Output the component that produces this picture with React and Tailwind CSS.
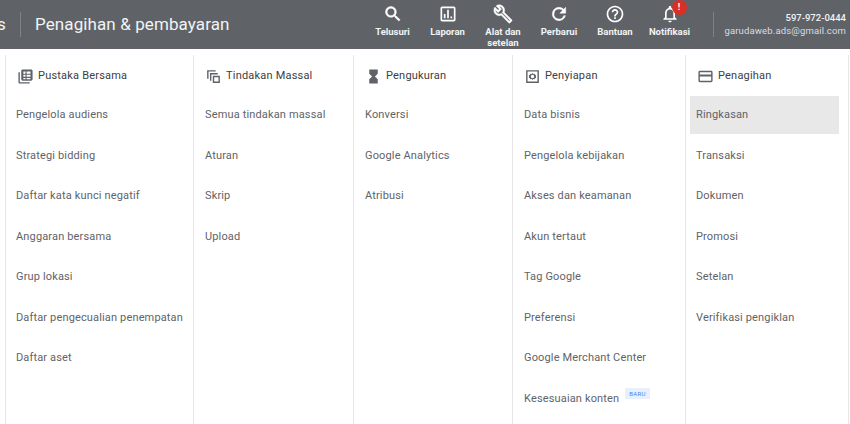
const Search = () => (
  <svg width="20" height="20" viewBox="0 0 24 24" fill="#fff" stroke="#fff" strokeWidth="0.6"><path d="M15.5 14h-.79l-.28-.27A6.47 6.47 0 0 0 16 9.5 6.5 6.5 0 1 0 9.5 16c1.61 0 3.09-.59 4.23-1.57l.27.28v.79l5 4.99L20.49 19l-4.99-5zm-6 0C7.01 14 5 11.99 5 9.5S7.01 5 9.5 5 14 7.01 14 9.5 11.99 14 9.5 14z" /></svg>
);
const Report = () => (
  <svg width="20" height="20" viewBox="0 0 24 24" fill="#fff"><path d="M19 3H5c-1.1 0-2 .9-2 2v14c0 1.1.9 2 2 2h14c1.1 0 2-.9 2-2V5c0-1.1-.9-2-2-2zm0 16H5V5h14v14zM7 12h2v5H7zm4-5h2v10h-2zm4 8h2v2h-2z" /></svg>
);
const Wrench = () => (
  <svg width="20" height="20" viewBox="0 0 24 24" fill="#fff" stroke="#fff" strokeWidth="0.5"><path d="M22.61 18.99l-9.08-9.08c.93-2.34.45-5.1-1.44-7C9.79.61 6.21.4 3.66 2.26L7.5 6.11 6.08 7.52 2.25 3.69C.39 6.23.6 9.82 2.9 12.11c1.86 1.86 4.57 2.35 6.89 1.48l9.11 9.11c.39.39 1.02.39 1.41 0l2.3-2.3c.4-.38.4-1.01 0-1.41zm-3 1.6l-9.46-9.46c-.61.45-1.29.72-2 .82-1.36.2-2.79-.21-3.83-1.25C3.37 9.76 2.93 8.5 3 7.26l3.09 3.09 4.24-4.24-3.09-3.09c1.24-.07 2.49.37 3.44 1.31 1.08 1.08 1.49 2.57 1.24 3.96-.12.71-.42 1.37-.88 1.96l9.45 9.45-.88.89z" /></svg>
);
const Refresh = () => (
  <svg width="20" height="20" viewBox="0 0 24 24" fill="#fff" stroke="#fff" strokeWidth="0.6"><path d="M17.65 6.35A7.95 7.95 0 0 0 12 4a8 8 0 1 0 7.73 10h-2.08A6 6 0 1 1 12 6c1.66 0 3.14.69 4.22 1.78L13 11h7V4l-2.35 2.35z" /></svg>
);
const Help = () => (
  <svg width="20" height="20" viewBox="0 0 24 24" fill="#fff"><path d="M11 18h2v-2h-2v2zm1-16C6.48 2 2 6.48 2 12s4.48 10 10 10 10-4.48 10-10S17.52 2 12 2zm0 18c-4.41 0-8-3.59-8-8s3.59-8 8-8 8 3.59 8 8-3.59 8-8 8zm0-14c-2.21 0-4 1.79-4 4h2c0-1.1.9-2 2-2s2 .9 2 2c0 2-3 1.75-3 5h2c0-2.25 3-2.5 3-5 0-2.21-1.79-4-4-4z" /></svg>
);
const Bell = () => (
  <svg width="20" height="20" viewBox="0 0 24 24" fill="#fff"><path d="M12 22c1.1 0 2-.9 2-2h-4c0 1.1.9 2 2 2zm6-6v-5c0-3.07-1.63-5.64-4.5-6.32V4c0-.83-.67-1.5-1.5-1.5s-1.5.67-1.5 1.5v.68C7.64 5.36 6 7.92 6 11v5l-2 2v1h16v-1l-2-2zm-2 1H8v-6c0-2.48 1.51-4.5 4-4.5s4 2.02 4 4.5v6z" /></svg>
);

const Library = () => (
  <svg width="17" height="17" viewBox="0 0 24 24" fill="#5f6368"><path d="M4 6H2v14c0 1.1.9 2 2 2h14v-2H4V6zm16-4H8c-1.1 0-2 .9-2 2v12c0 1.1.9 2 2 2h12c1.1 0 2-.9 2-2V4c0-1.1-.9-2-2-2zM9 5h3v3H9V5zm0 4.5h3v3H9v-3zM9 14h3v2H9v-2zm4.5-9H19v3h-5.5V5zm0 4.5H19v3h-5.5v-3zm0 4.5H19v2h-5.5v-2z" /></svg>
);
const Bulk = () => (
  <svg width="17" height="17" viewBox="0 0 24 24" fill="#5f6368"><path d="M3 3h12v2H5v10H3V3zm4 4h11v2H9v9H7V7zm4 4h10v10H11V11zm2 2v6h6v-6h-6z" /></svg>
);
const Hourglass = () => (
  <svg width="17" height="17" viewBox="0 0 24 24" fill="#5f6368"><path d="M6 2v6l4 4-4 4v6h12v-6l-4-4 4-4V2H6z" /></svg>
);
const Setup = () => (
  <svg width="17" height="17" viewBox="0 0 24 24" fill="#5f6368"><path fillRule="evenodd" d="M3 3h18v18H3V3zm2 2v14h14V5H5zm7 2.2l1.2 1.1 1.7-.2.7 1.5 1.5.8-.3 1.6.3 1.6-1.5.8-.7 1.5-1.7-.2L12 16.8l-1.2-1.1-1.7.2-.7-1.5-1.5-.8.3-1.6-.3-1.6 1.5-.8.7-1.5 1.7.2L12 7.2zM12 9.6a2.4 2.4 0 1 0 0 4.8 2.4 2.4 0 0 0 0-4.8z" /></svg>
);
const Card = () => (
  <svg width="17" height="17" viewBox="0 0 24 24" fill="#5f6368"><path d="M20 4H4c-1.1 0-2 .9-2 2v12c0 1.1.9 2 2 2h16c1.1 0 2-.9 2-2V6c0-1.1-.9-2-2-2zm0 14H4v-6h16v6zm0-9H4V6h16v3z" /></svg>
);

const nav = [
  { icon: <Search />, label: "Telusuri", w: "w-[55px]" },
  { icon: <Report />, label: "Laporan", w: "w-[55px]" },
  { icon: <Wrench />, label: "Alat dan setelan", w: "w-[56px]" },
  { icon: <Refresh />, label: "Perbarui", w: "w-[56px]" },
  { icon: <Help />, label: "Bantuan", w: "w-[56px]" },
  { icon: <Bell />, label: "Notifikasi", w: "w-[53px]", badge: true },
];

const columns = [
  { title: "Pustaka Bersama", icon: <Library />, w: "w-[188px]", ind: "pl-[10px]", items: ["Pengelola audiens", "Strategi bidding", "Daftar kata kunci negatif", "Anggaran bersama", "Grup lokasi", "Daftar pengecualian penempatan", "Daftar aset"] },
  { title: "Tindakan Massal", icon: <Bulk />, w: "w-[160px]", ind: "pl-[11px]", items: ["Semua tindakan massal", "Aturan", "Skrip", "Upload"] },
  { title: "Pengukuran", icon: <Hourglass />, w: "w-[159px]", ind: "pl-[11px]", items: ["Konversi", "Google Analytics", "Atribusi"] },
  { title: "Penyiapan", icon: <Setup />, w: "w-[173px]", ind: "pl-[11px]", items: ["Data bisnis", "Pengelola kebijakan", "Akses dan keamanan", "Akun tertaut", "Tag Google", "Preferensi", "Google Merchant Center", "Kesesuaian konten"] },
  { title: "Penagihan", icon: <Card />, w: "w-[164px] border-r", ind: "pl-[10px]", items: ["Ringkasan", "Transaksi", "Dokumen", "Promosi", "Setelan", "Verifikasi pengiklan"] },
];

export default function App() {
  return (
    <div className="w-[850px] h-[424px] overflow-hidden bg-white flex flex-col font-['Roboto',sans-serif]">
      <header className="h-[49px] shrink-0 bg-[#5f6368] flex items-center text-white">
        <div className="w-[21px] h-[25px] border-r border-[#7f8387] overflow-hidden text-[17px] leading-[25px] text-[#f1f3f4] flex justify-start">
          <span className="ml-[-3px]">s</span>
        </div>
        <div className="ml-[14px] w-[330px] text-[17px] leading-[25px] text-[#f1f3f4] tracking-[0.1px] whitespace-nowrap">Penagihan &amp; pembayaran</div>
        <nav className="flex items-start h-full pt-[4px]">
          {nav.map((n) => (
            <div key={n.label} className={`${n.w} flex flex-col items-center`}>
              <div className="relative h-[20px]">
                {n.icon}
                {n.badge && (
                  <span className="absolute left-[12px] top-[-4px] w-[15px] h-[15px] rounded-full bg-[#d93025] text-white text-[9px] font-bold leading-[15px] text-center">!</span>
                )}
              </div>
              <span className="mt-[2px] text-[9.5px] leading-[11px] font-bold text-center text-[#f1f3f4]">{n.label}</span>
            </div>
          ))}
        </nav>
        <div className="ml-[17px] w-px h-[25px] bg-[#7f8387]" />
        <div className="flex-1 pr-[4px] pb-[2px] text-right text-[9.5px] leading-[13px] text-[#f1f3f4] whitespace-nowrap">
          <div className="font-medium">597-972-0444</div>
          <div className="tracking-[0.15px] text-[#dadce0]">garudaweb.ads@gmail.com</div>
        </div>
      </header>
      <main className="flex-1 flex pl-[5px] pt-[6px] overflow-hidden">
        {columns.map((c) => (
          <section key={c.title} className={`${c.w} shrink-0 border-l border-[#e6e6e6] h-[369px]`}>
            <div className="h-[40px] pt-[2px] pl-[11px] flex items-center gap-[4px] text-[11px] text-[#3c4043] tracking-[0.2px]">
              {c.icon}
              <span>{c.title}</span>
            </div>
            <ul>
              {c.items.map((it) => (
                <li key={it} className="h-[40.5px] flex items-center">
                  <div
                    className={
                      it === "Ringkasan"
                        ? "h-[38px] w-[149px] ml-[4px] pl-[6px] flex items-center bg-[#e8e8e8] text-[11px] tracking-[0.15px] text-[#5f6368]"
                        : `h-[38px] ${c.ind} flex items-center text-[11px] tracking-[0.15px] text-[#5f6368] whitespace-nowrap`
                    }
                  >
                    {it}
                    {it === "Kesesuaian konten" && (
                      <span className="ml-[6px] mt-[-10px] px-[4px] h-[11px] bg-[#e8f0fe] text-[#4285f4] text-[6px] leading-[11px] tracking-[0.3px]">BARU</span>
                    )}
                  </div>
                </li>
              ))}
            </ul>
          </section>
        ))}
      </main>
    </div>
  );
}
